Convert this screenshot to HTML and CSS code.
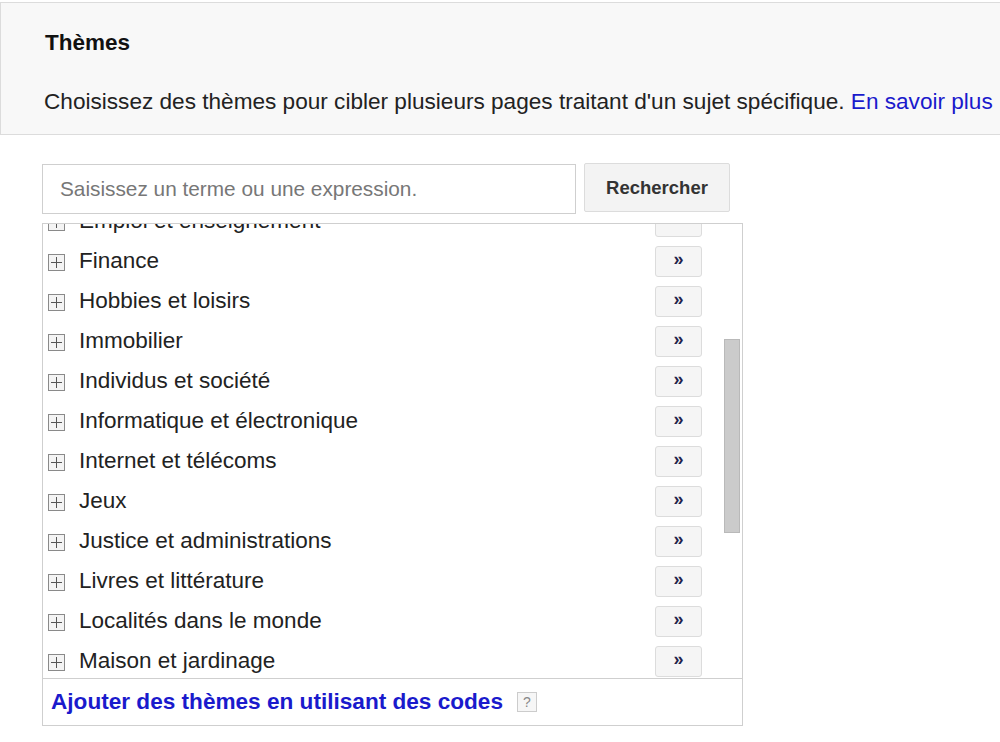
FILE: index.html
```html
<!DOCTYPE html>
<html lang="fr">
<head>
    <meta charset="UTF-8">
    <meta name="viewport" content="width=device-width, initial-scale=1.0">
    <title>Thèmes</title>
    <link rel="stylesheet" href="styles.css">
</head>
<body>
    <div class="header">
        <h2 class="title">Thèmes</h2>
        <p class="intro">Choisissez des thèmes pour cibler plusieurs pages traitant d'un sujet spécifique. <a href="#">En savoir plus</a></p>
    </div>
    <div class="main">
        <div class="search">
            <input type="text" class="search-box" placeholder="Saisissez un terme ou une expression.">
            <button class="search-btn">Rechercher</button>
        </div>
        <div class="picker">
            <div class="picker-body">
                <ul class="topics" id="topics">
                    <li><span class="expand"></span><span class="name">Actualités</span><button class="add">»</button></li>
                    <li><span class="expand"></span><span class="name">Alimentation et boissons</span><button class="add">»</button></li>
                    <li><span class="expand"></span><span class="name">Animaux de compagnie</span><button class="add">»</button></li>
                    <li><span class="expand"></span><span class="name">Arts et divertissements</span><button class="add">»</button></li>
                    <li><span class="expand"></span><span class="name">Beauté et remise en forme</span><button class="add">»</button></li>
                    <li><span class="expand"></span><span class="name">Commerce et industrie</span><button class="add">»</button></li>
                    <li><span class="expand"></span><span class="name">Emploi et enseignement</span><button class="add">»</button></li>
                    <li><span class="expand"></span><span class="name">Finance</span><button class="add">»</button></li>
                    <li><span class="expand"></span><span class="name">Hobbies et loisirs</span><button class="add">»</button></li>
                    <li><span class="expand"></span><span class="name">Immobilier</span><button class="add">»</button></li>
                    <li><span class="expand"></span><span class="name">Individus et société</span><button class="add">»</button></li>
                    <li><span class="expand"></span><span class="name">Informatique et électronique</span><button class="add">»</button></li>
                    <li><span class="expand"></span><span class="name">Internet et télécoms</span><button class="add">»</button></li>
                    <li><span class="expand"></span><span class="name">Jeux</span><button class="add">»</button></li>
                    <li><span class="expand"></span><span class="name">Justice et administrations</span><button class="add">»</button></li>
                    <li><span class="expand"></span><span class="name">Livres et littérature</span><button class="add">»</button></li>
                    <li><span class="expand"></span><span class="name">Localités dans le monde</span><button class="add">»</button></li>
                    <li><span class="expand"></span><span class="name">Maison et jardinage</span><button class="add">»</button></li>
                    <li><span class="expand"></span><span class="name">Référence</span><button class="add">»</button></li>
                    <li><span class="expand"></span><span class="name">Santé</span><button class="add">»</button></li>
                    <li><span class="expand"></span><span class="name">Sciences</span><button class="add">»</button></li>
                    <li><span class="expand"></span><span class="name">Shopping</span><button class="add">»</button></li>
                    <li><span class="expand"></span><span class="name">Sports</span><button class="add">»</button></li>
                    <li><span class="expand"></span><span class="name">Véhicules</span><button class="add">»</button></li>
                    <li><span class="expand"></span><span class="name">Voyages et tourisme</span><button class="add">»</button></li>
                    <li><span class="expand"></span><span class="name">Vie en ligne</span><button class="add">»</button></li>
                </ul>
                <div class="scrollbar"><div class="thumb"></div></div>
            </div>
            <div class="picker-footer">
                <a href="#" class="codes-link">Ajouter des thèmes en utilisant des codes</a>
                <span class="help">?</span>
            </div>
        </div>
    </div>

    <script>
        document.getElementById('topics').scrollTop = 268;
    </script>
</body>
</html>
```

FILE: styles.css
```css
body {
    font-family: "Liberation Sans", Arial, sans-serif;
    margin: 0;
    padding: 0;
    background: #fff;
    color: #222;
}
a {
    color: #1a1acc;
    text-decoration: none;
}
.header {
    background: #f8f8f8;
    border-top: 1px solid #dcdcdc;
    border-left: 1px solid #dcdcdc;
    border-bottom: 1px solid #dcdcdc;
    margin-top: 2px;
    padding: 0 0 0 43px;
    height: 133px;
    box-sizing: border-box;
    white-space: nowrap;
    overflow: hidden;
}
.title {
    font-size: 22.5px;
    font-weight: bold;
    margin: 0;
    padding-top: 27px;
    padding-left: 1px;
    color: #111;
}
.intro {
    font-size: 22.6px;
    margin: 0;
    padding-top: 33px;
    color: #222;
}
.main {
    padding: 28px 0 0 42px;
}
.search {
    display: flex;
    align-items: flex-start;
    gap: 8px;
}
.search-box {
    width: 534px;
    height: 50px;
    box-sizing: border-box;
    margin-top: 1px;
    border: 1px solid #cfcfcf;
    padding: 0 17px;
    font-family: "Liberation Sans", Arial, sans-serif;
    font-size: 20.8px;
    outline: none;
}
.search-box::placeholder {
    color: #777;
}
.search-btn {
    width: 146px;
    height: 49px;
    background: #f3f3f3;
    border: 1px solid #dcdcdc;
    border-radius: 2px;
    font-family: "Liberation Sans", Arial, sans-serif;
    font-size: 18.5px;
    font-weight: bold;
    color: #333;
}
.picker {
    margin-top: 9px;
    width: 701px;
    border: 1px solid #cfcfcf;
    box-sizing: border-box;
}
.picker-body {
    display: flex;
    height: 454px;
}
.topics {
    flex: 1;
    list-style: none;
    margin: 0;
    padding: 5px 0;
    box-sizing: border-box;
    overflow: hidden;
}
.scrollbar {
    width: 20px;
    padding: 0 2px;
    box-sizing: border-box;
}
.thumb {
    margin-top: 115px;
    height: 194px;
    background: #cbcbcb;
    border: 1px solid #b9b9b9;
    box-sizing: border-box;
}
.topics li {
    display: flex;
    align-items: center;
    height: 40px;
    padding-left: 5px;
    padding-right: 20px;
}
.expand {
    position: relative;
    width: 17px;
    height: 17px;
    border: 1px solid #8a8a8a;
    background: #f4f4f4;
    box-sizing: border-box;
    margin-right: 14px;
    margin-top: 2px;
    flex: none;
}
.expand::before,
.expand::after {
    content: "";
    position: absolute;
    background: #555;
}
.expand::before {
    left: 2px;
    right: 2px;
    top: 7px;
    height: 1px;
}
.expand::after {
    top: 2px;
    bottom: 2px;
    left: 7px;
    width: 1px;
}
.name {
    flex: 1;
    font-size: 22.5px;
    color: #222;
}
.add {
    width: 47px;
    height: 31px;
    background: #f5f5f5;
    border: 1px solid #dcdcdc;
    border-radius: 3px;
    font-family: "Liberation Sans", Arial, sans-serif;
    font-size: 18px;
    font-weight: bold;
    color: #22224a;
    padding: 0 0 4px;
}
.picker-footer {
    border-top: 1px solid #cfcfcf;
    height: 46px;
    display: flex;
    align-items: center;
    padding-left: 8px;
}
.codes-link {
    font-size: 22.6px;
    font-weight: bold;
    color: #1a1acc;
}
.help {
    margin-left: 14px;
    width: 20px;
    height: 20px;
    box-sizing: border-box;
    border: 1px solid #ccc;
    background: #f6f6f6;
    color: #888;
    font-size: 14px;
    display: flex;
    align-items: center;
    justify-content: center;
}
```
